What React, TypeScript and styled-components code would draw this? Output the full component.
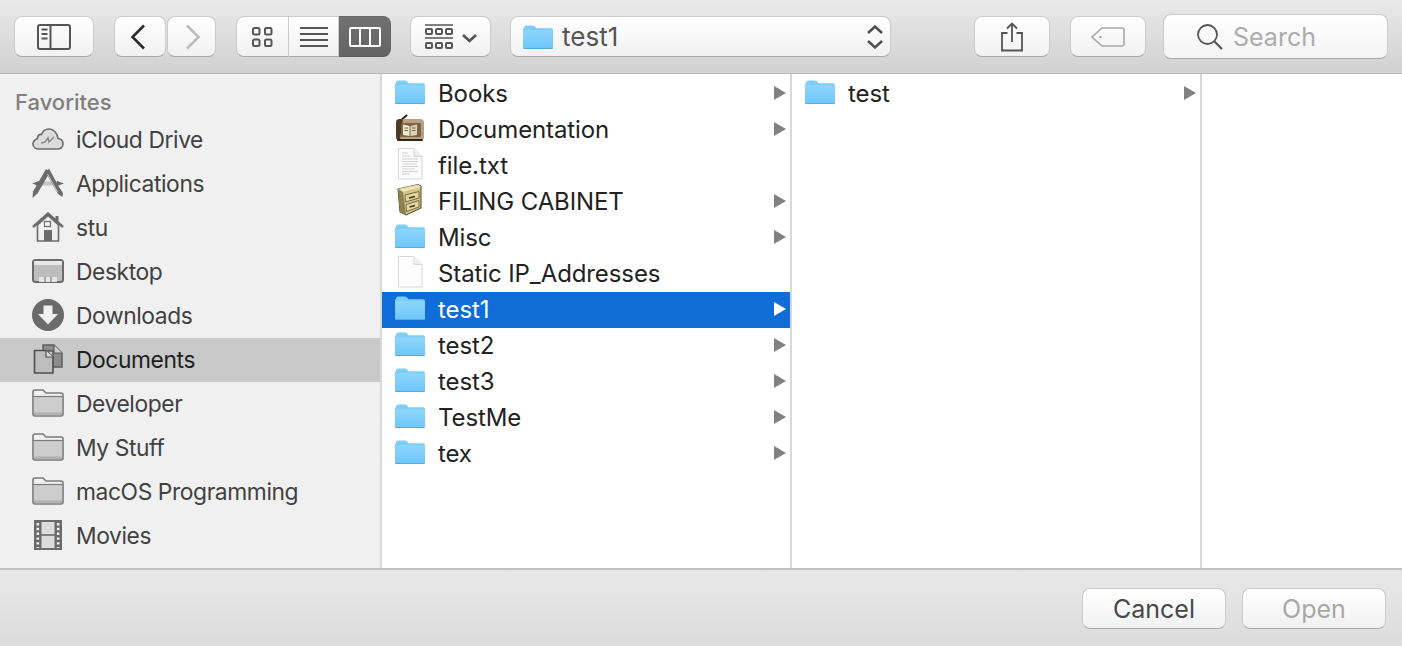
import React from 'react';
import styled, { createGlobalStyle } from 'styled-components';

const GlobalStyle = createGlobalStyle`
  html, body {
    margin: 0;
    padding: 0;
    background: #e6e6e6;
  }
`;

const Dialog = styled.div`
  width: 1402px;
  height: 646px;
  overflow: hidden;
  display: flex;
  flex-direction: column;
  font-family: Inter, "Liberation Sans", sans-serif;
`;

const Toolbar = styled.div`
  height: 74px;
  flex: none;
  box-sizing: border-box;
  display: flex;
  align-items: center;
  padding: 0 14px;
  background: linear-gradient(#e9e9e9, #d1d1d1);
  border-bottom: 1px solid #b9b9b9;
`;

const Group = styled.div<{ $ml?: number }>`
  display: flex;
  margin-left: ${p => p.$ml ?? 20}px;
`;

const ToolButton = styled.div<{ $w: number; $ml?: number }>`
  width: ${p => p.$w}px;
  height: 41px;
  margin-left: ${p => p.$ml ?? 0}px;
  flex: none;
  box-sizing: border-box;
  display: flex;
  align-items: center;
  justify-content: center;
  border-radius: 8px;
  border: 1px solid #cbcbcb;
  border-bottom-color: #a8a8a8;
  background: linear-gradient(#ffffff, #f1f1f1);
`;

const Segment = styled.div<{ $w: number; $active?: boolean }>`
  width: ${p => p.$w}px;
  height: 41px;
  box-sizing: border-box;
  display: flex;
  align-items: center;
  justify-content: center;
  border: 1px solid ${p => (p.$active ? '#666' : '#cbcbcb')};
  border-bottom-color: ${p => (p.$active ? '#5c5c5c' : '#a8a8a8')};
  border-left-width: 0;
  background: ${p => (p.$active ? 'linear-gradient(#717171, #646464)' : 'linear-gradient(#ffffff, #f1f1f1)')};
  &:first-child {
    border-left-width: 1px;
    border-radius: 8px 0 0 8px;
  }
  &:last-child {
    border-radius: 0 8px 8px 0;
  }
`;

const PathPopup = styled.div`
  width: 381px;
  height: 41px;
  margin-left: 19px;
  flex: none;
  box-sizing: border-box;
  display: flex;
  align-items: center;
  padding: 0 7px 0 12px;
  gap: 9px;
  border-radius: 8px;
  border: 1px solid #cbcbcb;
  border-bottom-color: #a8a8a8;
  background: linear-gradient(#ffffff, #f1f1f1);
  color: #555;
  font-size: 26px;
`;

const PathName = styled.span`
  flex: 1;
`;

const Spacer = styled.div`
  flex: 1;
`;

const SearchField = styled.div`
  width: 225px;
  height: 45px;
  margin-left: 17px;
  flex: none;
  box-sizing: border-box;
  display: flex;
  align-items: center;
  padding-left: 33px;
  gap: 10px;
  border-radius: 8px;
  border: 1px solid #cbcbcb;
  border-bottom-color: #a8a8a8;
  background: linear-gradient(#ffffff, #f3f3f3);
  color: #acacac;
  font-size: 25px;
`;

const Main = styled.div`
  height: 494px;
  flex: none;
  display: flex;
  background: #fff;
`;

const Sidebar = styled.div`
  width: 382px;
  flex: none;
  box-sizing: border-box;
  background: #f0f0f0;
  border-right: 2px solid #d8d8d8;
`;

const SidebarTitle = styled.div`
  height: 44px;
  box-sizing: border-box;
  padding: 15px 0 0 15px;
  font-size: 22px;
  line-height: 26px;
  font-weight: 500;
  color: #7f7f7f;
`;

const SidebarRow = styled.div<{ $selected?: boolean }>`
  height: 44px;
  box-sizing: border-box;
  display: flex;
  align-items: center;
  gap: 12px;
  padding: 0 0 2px 32px;
  font-size: 22.8px;
  letter-spacing: -0.4px;
  color: ${p => (p.$selected ? '#1e1e1e' : '#414141')};
  background: ${p => (p.$selected ? '#c9c9c9' : 'transparent')};
`;

const Column = styled.div<{ $last?: boolean }>`
  width: ${p => (p.$last ? 'auto' : '410px')};
  flex: ${p => (p.$last ? '1' : 'none')};
  box-sizing: border-box;
  padding-top: 2px;
  border-right: ${p => (p.$last ? '0' : '2px solid #d8d8d8')};
`;

const FileRow = styled.div<{ $selected?: boolean }>`
  height: 36px;
  box-sizing: border-box;
  display: flex;
  align-items: center;
  gap: 13px;
  padding: 0 4px 2px 13px;
  font-size: 24px;
  letter-spacing: -0.1px;
  color: ${p => (p.$selected ? '#fff' : '#222')};
  background: ${p => (p.$selected ? '#106cd6' : 'transparent')};
  svg:first-child {
    margin-bottom: 2px;
  }
`;

const FileName = styled.span`
  flex: 1;
`;

const Footer = styled.div`
  flex: 1;
  box-sizing: border-box;
  display: flex;
  justify-content: flex-end;
  gap: 16px;
  padding: 18px 16px 0 0;
  background: linear-gradient(#e8e8e8, #dcdcdc);
  border-top: 2px solid #c1c1c1;
`;

const FooterButton = styled.div<{ $disabled?: boolean }>`
  width: 144px;
  height: 41px;
  box-sizing: border-box;
  display: flex;
  align-items: center;
  justify-content: center;
  border-radius: 8px;
  border: 1px solid #cbcbcb;
  border-bottom-color: #a8a8a8;
  background: linear-gradient(#ffffff, #f1f1f1);
  font-size: 25px;
  color: ${p => (p.$disabled ? '#a8a8a8' : '#484848')};
`;

const Svg = styled.svg`
  display: block;
  flex: none;
`;

// the back and forward chevrons sit off centre in their buttons
const BackChevron = styled(Svg)`
  margin-right: 5px;
`;

const ForwardChevron = styled(Svg)`
  margin-left: 3px;
`;

// these sit a little higher in their row than the folders do
const DocSvg = styled(Svg)`
  && {
    margin-bottom: 3px;
  }
`;

const FolderIcon: React.FC<{ id: string }> = ({ id }) => (
  <Svg width="30" height="24" viewBox="0 0 30 24">
    <defs>
      <linearGradient id={id} x1="0" y1="0" x2="0" y2="1">
        <stop offset="0" stopColor="#8ed6fb" />
        <stop offset="1" stopColor="#6cc6fb" />
      </linearGradient>
    </defs>
    <path d="M1 3 Q1 0.5 3 0.5 H10 Q11.5 0.5 12.5 2 L13.5 3.2 H28 Q30 3.2 30 5 V22 Q30 24 28 24 H2 Q0 24 0 22 V4 Z" fill="#7ccdf9" />
    <path d="M0 6.5 Q0 5.2 2 5.2 H28 Q30 5.2 30 6.5 V22 Q30 23.5 28 23.5 H2 Q0 23.5 0 22 Z" fill={`url(#${id})`} />
    <rect x="0.5" y="23" width="29" height="1" fill="#5aa8d8" />
  </Svg>
);

const ArrowIcon: React.FC<{ light?: boolean }> = ({ light }) => (
  <Svg width="12" height="14" viewBox="0 0 12 14">
    <path d="M0 0 L12 7 L0 14 Z" fill={light ? '#fff' : '#808080'} />
  </Svg>
);

const DocumentationIcon = () => (
  <DocSvg width="30" height="28" viewBox="0 0 30 28">
    <path d="M4 8 L12 1" stroke="#2b2118" strokeWidth="2" />
    <path d="M5 5 H25 Q29 5 29 9 V23 Q29 26 26 26 H4 Q1 26 1 23 V9 Q1 5 5 5 Z" fill="#b7a17e" />
    <path d="M1 9 Q1 5 5 5 H8 L5 26 H4 Q1 26 1 23 Z" fill="#4c3a28" />
    <rect x="6" y="9" width="20" height="14" rx="1" fill="#7b6346" />
    <path d="M8 10.5 L14.5 12 V22 L8 21 Z" fill="#efe8d2" />
    <path d="M22 10.5 L15.5 12 V22 L22 21 Z" fill="#ddd2b4" />
    <path d="M9.5 14 H13 M9.5 16.5 H13 M17 14 H20.5 M17 16.5 H20.5" stroke="#77664a" strokeWidth="1" />
    <rect x="2" y="25" width="26" height="2" rx="1" fill="#2e2419" />
  </DocSvg>
);

const TextFileIcon = () => (
  <DocSvg width="30" height="32" viewBox="0 0 30 32">
    <path d="M3.5 0.5 H19 L27 8.5 V31 H3.5 Z" fill="#fcfcfc" stroke="#d6d6d6" />
    <path d="M19 0.5 V8.5 H27" fill="#ededed" stroke="#d6d6d6" />
    <path d="M7 5 H13 M7 8 H15 M7 11 H23 M7 13.5 H23 M7 16 H22 M7 18.5 H23 M7 21 H20 M7 23.5 H23 M7 26 H15" stroke="#c8c8c8" strokeWidth="0.8" />
  </DocSvg>
);

const BlankFileIcon = () => (
  <DocSvg width="30" height="32" viewBox="0 0 30 32">
    <path d="M3.5 0.5 H19 L27 8.5 V31 H3.5 Z" fill="#fdfdfd" stroke="#d9d9d9" />
    <path d="M19 0.5 V8.5 H27" fill="#f0f0f0" stroke="#d9d9d9" />
  </DocSvg>
);

const CabinetIcon = () => (
  <Svg width="30" height="32" viewBox="0 0 30 32">
    <path d="M3 5 L23 0.5 L26 2 V24 L11 31 L5 28 Z" fill="#d2c586" stroke="#4a4230" strokeWidth="1" />
    <path d="M3 5 L8 8 L26 3 L23 0.5 Z" fill="#ece2ae" />
    <path d="M3 5 L8 8 L11 31 L5 28 Z" fill="#8c8050" />
    <path d="M10 11 L24 7.5 V14 L10.5 18 Z M11 20.5 L24 16.5 V23 L11.5 27.5 Z" fill="#e0d59a" stroke="#5a5138" strokeWidth="0.8" />
    <path d="M14 14 L20 12.5 M14.5 23 L20 21.5" stroke="#3e3826" strokeWidth="1.4" />
  </Svg>
);

const SIDE = '#6b6b6b';

const CloudIcon = () => (
  <Svg width="32" height="24" viewBox="0 0 32 24">
    <path d="M7 22 H25 C29 22 31 19.5 31 16.5 C31 13.5 28.5 11.5 26 11.5 C25.5 6 21.5 2 17 2 C13 2 10.5 4.5 9.5 7.5 C8 7 5.5 8 5.5 11.5 C3 12.5 1 14 1 17 C1 20 3.5 22 7 22 Z" fill="#dcdcdc" stroke={SIDE} strokeWidth="1.6" />
    <path d="M9 16 L13 15 L16 11 L17 15 L22 10" fill="none" stroke="#8a8a8a" strokeWidth="1.5" />
  </Svg>
);

const AppsIcon = () => (
  <Svg width="32" height="30" viewBox="0 0 32 30">
    <path d="M5 13.5 H27 L28 17.5 H4 Z" fill="#c4c4c4" />
    <path d="M0 15.5 L7 13 V18 Z M32 15.5 L25 13 V18 Z" fill={SIDE} />
    <path d="M14 1 L18 4 L5.5 25.5 L0.5 30 L1 23.5 Z" fill={SIDE} />
    <path d="M17 0.5 L27 19 L31 25 L30.5 29 L26 26 L14 5 Z" fill={SIDE} />
    <path d="M15.5 6 L25.5 24" stroke="#d0d0d0" strokeWidth="1" />
  </Svg>
);

const HomeIcon = () => (
  <Svg width="32" height="30" viewBox="0 0 32 30">
    <path d="M5.5 13 V29 H26.5 V13 L16 3.5 Z" fill="#f0f0f0" stroke={SIDE} strokeWidth="1.6" />
    <path d="M1 15 L16 1.5 L31 15" fill="none" stroke={SIDE} strokeWidth="2.4" />
    <path d="M25 4 V9" stroke={SIDE} strokeWidth="3" />
    <rect x="12.5" y="9.5" width="6" height="5" fill="none" stroke={SIDE} strokeWidth="1.2" />
    <rect x="12" y="18" width="8" height="11" fill={SIDE} />
  </Svg>
);

const DesktopIcon = () => (
  <Svg width="32" height="24" viewBox="0 0 32 24">
    <rect x="1" y="1" width="30" height="22" rx="2.5" fill="#bdbdbd" stroke={SIDE} strokeWidth="2" />
    <rect x="2" y="2" width="28" height="4" fill="#e8e8e8" />
    <rect x="7" y="18" width="18" height="5" fill="#e4e4e4" />
    <path d="M13 18 V23 M19 18 V23" stroke={SIDE} strokeWidth="1" />
  </Svg>
);

const DownloadsIcon = () => (
  <Svg width="32" height="32" viewBox="0 0 32 32">
    <circle cx="16" cy="16" r="16" fill={SIDE} />
    <path d="M11.5 6.5 H20.5 V15 H26 L16 25.5 L6 15 H11.5 Z" fill="#f0f0f0" />
  </Svg>
);

const DocumentsIcon = () => (
  <Svg width="32" height="30" viewBox="0 0 32 30">
    <path d="M11 7 V1 H22 L30 9 V23 H21 V7 Z" fill="#8c8c8c" stroke="#5b5b5b" strokeWidth="1.4" />
    <path d="M22 1 V9 H30" fill="#cfcfcf" stroke="#5b5b5b" strokeWidth="1.2" />
    <path d="M2.5 6.5 H14 L21 13 V29 H2.5 Z" fill="#bdbdbd" stroke="#4f4f4f" strokeWidth="1.6" />
    <path d="M14 6.5 V13 H21" fill="#dedede" stroke="#4f4f4f" strokeWidth="1.2" />
  </Svg>
);

const SideFolderIcon = () => (
  <Svg width="32" height="28" viewBox="0 0 32 28">
    <path d="M1 3 Q1 1 3 1 H11 L14 4 H29 Q31 4 31 6 V25 Q31 27 29 27 H3 Q1 27 1 25 Z" fill="#f0f0f0" stroke="#7a7a7a" strokeWidth="1.6" />
    <rect x="2" y="8" width="28" height="18" fill="#cdcdcd" />
    <path d="M1 7.5 H31" stroke="#7a7a7a" strokeWidth="1.2" />
    <rect x="2" y="23.5" width="28" height="2.5" fill="#b0b0b0" />
  </Svg>
);

const MoviesIcon = () => (
  <Svg width="32" height="30" viewBox="0 0 32 30">
    <rect x="3" y="1" width="26" height="28" fill="#dcdcdc" />
    <rect x="2" y="0" width="7.5" height="30" fill={SIDE} />
    <rect x="22.5" y="0" width="7.5" height="30" fill={SIDE} />
    <path d="M2 1 H30 M2 29 H30" stroke={SIDE} strokeWidth="2" />
    <path d="M9 15 H23" stroke={SIDE} strokeWidth="1.6" />
    <path d="M5.8 3 V28 M26.2 3 V28" stroke="#f0f0f0" strokeWidth="2.6" strokeDasharray="2.4 2.4" />
  </Svg>
);

const sidebarItems: { name: string; icon: React.ReactNode; selected?: boolean }[] = [
  { name: 'iCloud Drive', icon: <CloudIcon /> },
  { name: 'Applications', icon: <AppsIcon /> },
  { name: 'stu', icon: <HomeIcon /> },
  { name: 'Desktop', icon: <DesktopIcon /> },
  { name: 'Downloads', icon: <DownloadsIcon /> },
  { name: 'Documents', icon: <DocumentsIcon />, selected: true },
  { name: 'Developer', icon: <SideFolderIcon /> },
  { name: 'My Stuff', icon: <SideFolderIcon /> },
  { name: 'macOS Programming', icon: <SideFolderIcon /> },
  { name: 'Movies', icon: <MoviesIcon /> },
];

const files: { name: string; icon?: React.ReactNode; arrow: boolean; selected?: boolean }[] = [
  { name: 'Books', arrow: true },
  { name: 'Documentation', icon: <DocumentationIcon />, arrow: true },
  { name: 'file.txt', icon: <TextFileIcon />, arrow: false },
  { name: 'FILING CABINET', icon: <CabinetIcon />, arrow: true },
  { name: 'Misc', arrow: true },
  { name: 'Static IP_Addresses', icon: <BlankFileIcon />, arrow: false },
  { name: 'test1', arrow: true, selected: true },
  { name: 'test2', arrow: true },
  { name: 'test3', arrow: true },
  { name: 'TestMe', arrow: true },
  { name: 'tex', arrow: true },
];

const App: React.FC = () => (
  <Dialog>
    <GlobalStyle />
    <Toolbar>
      <Group $ml={0}>
        <ToolButton $w={80}>
          <Svg width="34" height="26" viewBox="0 0 34 26" fill="none" stroke="#555" strokeWidth="2">
            <rect x="1" y="1" width="32" height="24" rx="2" />
            <path d="M13.5 1 V25" />
            <path d="M4.5 5.5 H10.5 M4.5 10 H10.5 M4.5 14.5 H10.5" strokeWidth="1.8" />
          </Svg>
        </ToolButton>
      </Group>
      <Group>
        <ToolButton $w={52}>
          <BackChevron width="16" height="26" viewBox="0 0 16 26" fill="none" stroke="#2b2b2b" strokeWidth="2.6">
            <path d="M14 1.5 L2.5 13 L14 24.5" />
          </BackChevron>
        </ToolButton>
        <ToolButton $w={49} $ml={1}>
          <ForwardChevron width="16" height="26" viewBox="0 0 16 26" fill="none" stroke="#bdbdbd" strokeWidth="2.6">
            <path d="M2 1.5 L13.5 13 L2 24.5" />
          </ForwardChevron>
        </ToolButton>
      </Group>
      <Group>
        <Segment $w={53}>
          <Svg width="22" height="20" viewBox="0 0 22 20" fill="none" stroke="#555" strokeWidth="2">
            <rect x="1" y="1" width="6.5" height="6.5" rx="1.5" />
            <rect x="13" y="1" width="6.5" height="6.5" rx="1.5" />
            <rect x="1" y="12.5" width="6.5" height="6.5" rx="1.5" />
            <rect x="13" y="12.5" width="6.5" height="6.5" rx="1.5" />
          </Svg>
        </Segment>
        <Segment $w={50}>
          <Svg width="28" height="20" viewBox="0 0 28 20" fill="none" stroke="#555" strokeWidth="1.8">
            <path d="M0 1 H28 M0 7 H28 M0 13 H28 M0 19 H28" />
          </Svg>
        </Segment>
        <Segment $w={52} $active>
          <Svg width="32" height="20" viewBox="0 0 32 20" fill="none" stroke="#fff" strokeWidth="2">
            <rect x="1" y="1" width="30" height="18" rx="1" />
            <path d="M11 1 V19 M21 1 V19" />
          </Svg>
        </Segment>
      </Group>
      <Group $ml={19}>
        <ToolButton $w={81}>
          <Svg width="52" height="26" viewBox="0 0 52 26" fill="none" stroke="#555" strokeWidth="2">
            <path d="M0 1 H28 M0 14 H28" strokeWidth="1.6" />
            <rect x="1" y="5" width="6" height="5" rx="1" />
            <rect x="11" y="5" width="6" height="5" rx="1" />
            <rect x="21" y="5" width="6" height="5" rx="1" />
            <rect x="1" y="19" width="6" height="5" rx="1" />
            <rect x="11" y="19" width="6" height="5" rx="1" />
            <rect x="21" y="19" width="6" height="5" rx="1" />
            <path d="M38 11 L44.5 17 L51 11" strokeWidth="2.6" />
          </Svg>
        </ToolButton>
      </Group>
      <PathPopup>
        <FolderIcon id="pathFolder" />
        <PathName>test1</PathName>
        <Svg width="16" height="24" viewBox="0 0 16 24" fill="none" stroke="#4d4d4d" strokeWidth="2.4">
          <path d="M1 8 L8 1.5 L15 8 M1 16 L8 22.5 L15 16" />
        </Svg>
      </PathPopup>
      <Spacer />
      <ToolButton $w={76}>
        <Svg width="24" height="30" viewBox="0 0 24 30" fill="none" stroke="#555" strokeWidth="1.8">
          <path d="M7.5 11 H2 V28.5 H22 V11 H16.5" />
          <path d="M12 1.5 V20 M7 6.5 L12 1.5 L17 6.5" />
        </Svg>
      </ToolButton>
      <ToolButton $w={76} $ml={20}>
        <Svg width="34" height="20" viewBox="0 0 34 20" fill="none" stroke="#a9a9a9" strokeWidth="1.6">
          <path d="M11 1 H31 Q33 1 33 3 V17 Q33 19 31 19 H11 L1 10 Z" />
          <circle cx="9.5" cy="10" r="1.2" fill="#a9a9a9" stroke="none" />
        </Svg>
      </ToolButton>
      <SearchField>
        <Svg width="26" height="26" viewBox="0 0 26 26" fill="none" stroke="#555" strokeWidth="1.8">
          <circle cx="10.5" cy="10.5" r="9.5" />
          <path d="M17.5 17.5 L25 25" strokeWidth="2.2" />
        </Svg>
        Search
      </SearchField>
    </Toolbar>
    <Main>
      <Sidebar>
        <SidebarTitle>Favorites</SidebarTitle>
        {sidebarItems.map(item => (
          <SidebarRow key={item.name} $selected={item.selected}>
            {item.icon}
            {item.name}
          </SidebarRow>
        ))}
      </Sidebar>
      <Column>
        {files.map(file => (
          <FileRow key={file.name} $selected={file.selected}>
            {file.icon || <FolderIcon id={`folder-${file.name}`} />}
            <FileName>{file.name}</FileName>
            {file.arrow && <ArrowIcon light={file.selected} />}
          </FileRow>
        ))}
      </Column>
      <Column>
        <FileRow>
          <FolderIcon id="folder-test" />
          <FileName>test</FileName>
          <ArrowIcon />
        </FileRow>
      </Column>
      <Column $last />
    </Main>
    <Footer>
      <FooterButton>Cancel</FooterButton>
      <FooterButton $disabled>Open</FooterButton>
    </Footer>
  </Dialog>
);

export default App;
